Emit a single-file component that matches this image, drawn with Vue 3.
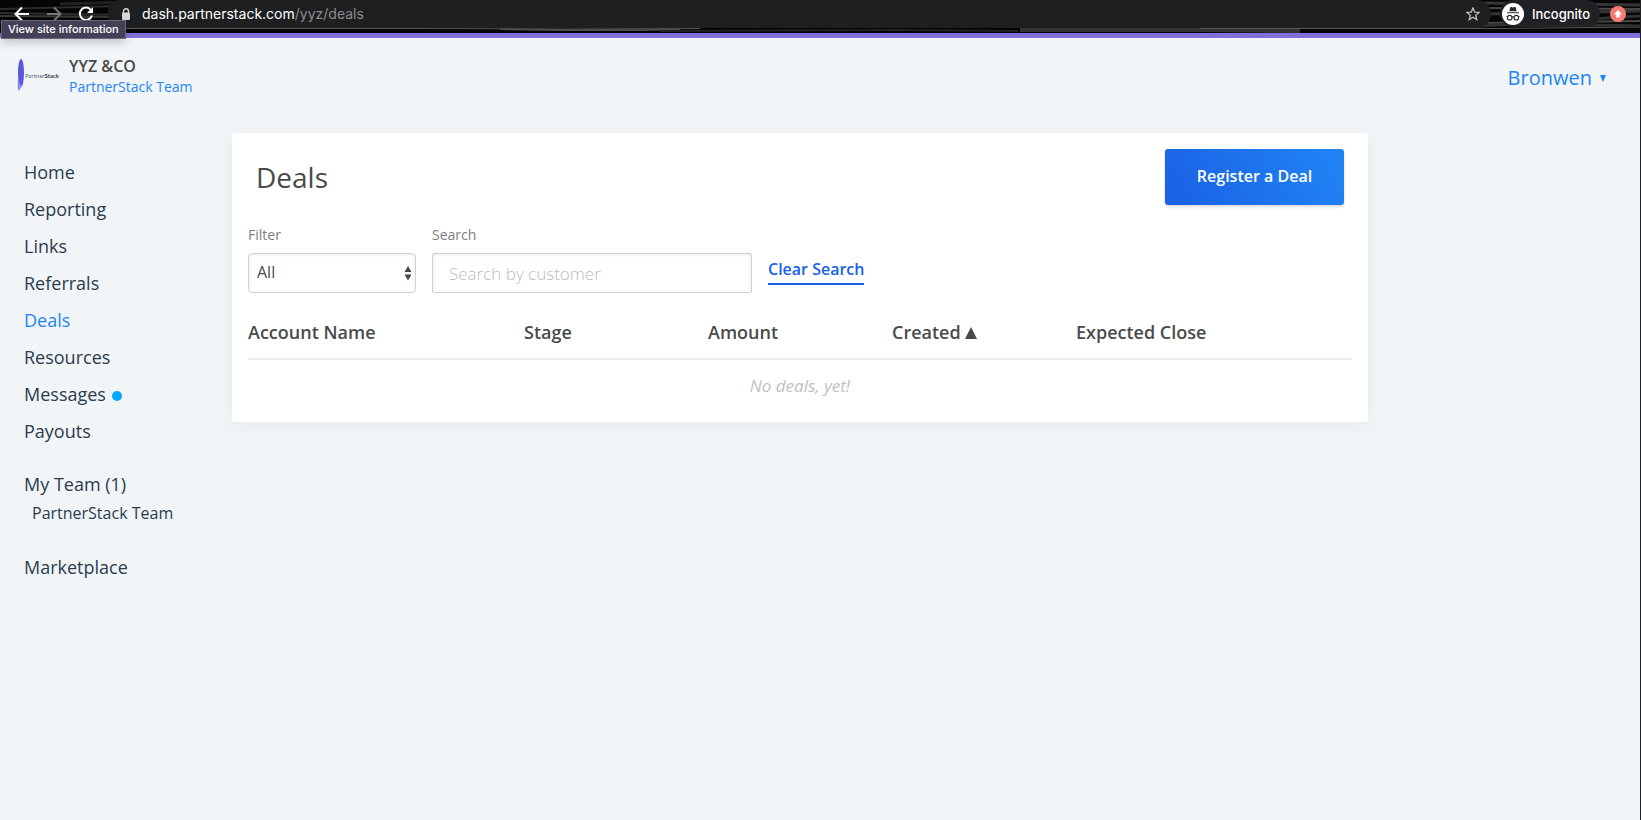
<script setup>
import { ref } from 'vue'

const mainLinks = [
  { label: 'Home' },
  { label: 'Reporting' },
  { label: 'Links' },
  { label: 'Referrals' },
  { label: 'Deals', active: true },
  { label: 'Resources' },
  { label: 'Messages', unread: true },
  { label: 'Payouts' },
]
const filter = ref('All')
const search = ref('')
</script>

<template>
  <div class="window">
    <header class="browser">
      <svg class="streaks" viewBox="0 0 1640 33" preserveAspectRatio="none" aria-hidden="true">
        <rect width="1640" height="33" fill="#050505" />
        <g fill="none">
          <path d="M0 9 L120 6 M0 13 L130 15" stroke="#2c2c2c" stroke-width="2" />
          <path d="M0 16 L120 17" stroke="#3a3a3a" stroke-width="2" />
          <path d="M60 4 L130 2 M120 23 L0 22" stroke="#222" stroke-width="3" />
          <path d="M120 28.5 H420 L560 29 L700 28.5" stroke="#555" />
          <path d="M500 29 L560 30 L640 30 L680 29" stroke="#4c4c4c" stroke-width="2" />
          <path d="M660 31 L900 30 L1018 31" stroke="#222" stroke-width="2" />
          <path d="M1020 30 H1200 L1300 31" stroke="#333" stroke-width="4" />
          <path d="M1200 28.5 H1500 L1640 27" stroke="#555" />
          <path d="M1480 3 L1640 5 M1480 14 L1640 11" stroke="#353535" stroke-width="3" />
          <path d="M1480 8 L1640 9 M1480 23 L1640 21" stroke="#484848" stroke-width="2" />
          <path d="M1480 26 L1640 16 M1590 25 L1640 26" stroke="#303030" stroke-width="3" />
        </g>
      </svg>
      <div class="nav-buttons">
        <button type="button" aria-label="Back">
          <svg width="16" height="16" viewBox="0 0 16 16" fill="none" stroke="#fff" stroke-width="2"><path d="M15 8H2M8 1.5L1.5 8L8 14.5" /></svg>
        </button>
        <button type="button" aria-label="Forward">
          <svg width="16" height="16" viewBox="0 0 16 16" fill="none" stroke="#777" stroke-width="2"><path d="M1 8H14M8 1.5L14.5 8L8 14.5" /></svg>
        </button>
        <button type="button" aria-label="Reload">
          <svg width="16" height="16" viewBox="0 0 16 16" fill="none" stroke="#fff" stroke-width="2"><path d="M13.2 4.2A6.2 6.2 0 1 0 14 9.5" /><path d="M15 1V7H9Z" fill="#fff" stroke="none" /></svg>
        </button>
      </div>
      <div class="omnibox">
        <svg width="10" height="12" viewBox="0 0 10 12"><path d="M2.5 5V3.2a2.5 2.5 0 0 1 5 0V5" fill="none" stroke="#d5d5d5" stroke-width="1.4" /><rect x="1" y="4.5" width="8" height="7.5" rx="1" fill="#d5d5d5" /></svg>
        <span class="url">dash.partnerstack.com<span class="path">/yyz/deals</span></span>
        <button type="button" class="star" aria-label="Bookmark">
          <svg width="14" height="14" viewBox="0 0 14 14" fill="none" stroke="#bdbdbd" stroke-width="1.3"><path d="M7 1L8.7 5.1L13.1 5.4L9.7 8.2L10.8 12.6L7 10.2L3.2 12.6L4.3 8.2L0.9 5.4L5.3 5.1Z" /></svg>
        </button>
      </div>
      <div class="incognito">
        <svg width="22" height="22" viewBox="0 0 22 22"><circle cx="11" cy="11" r="11" fill="#fff" /><path d="M7.3 8.3L8.3 4.3Q8.6 3.7 9.3 4L11 4.6L12.7 4Q13.4 3.7 13.7 4.3L14.7 8.3ZM5 9.2H17V10.3H5Z" fill="#292a2d" /><g fill="none" stroke="#292a2d" stroke-width="1.1"><circle cx="7.7" cy="14.7" r="2.3" /><circle cx="14.3" cy="14.7" r="2.3" /><path d="M4.5 13.5H6M10 14.2Q11 13.6 12 14.2M16 13.5H17.5" /></g></svg>
        <span>Incognito</span>
      </div>
      <button type="button" class="update" aria-label="Update browser">
        <svg width="16" height="16" viewBox="0 0 16 16"><circle cx="8" cy="8" r="8" fill="#f47c73" /><path d="M8 4L12.2 8.4H9.8V11.5H6.2V8.4H3.8Z" fill="#fff" /></svg>
      </button>
      <div class="tooltip" role="tooltip">View site information</div>
    </header>

    <div class="page">
      <div class="topbar">
        <div class="logo">
          <svg width="8" height="32" viewBox="0 0 8 32" aria-hidden="true">
            <ellipse cx="4" cy="14" rx="3" ry="14" fill="#5a58dd" />
            <path d="M1 18Q2 26 5 26L2 32Q0 30 1 18Z" fill="#8984f0" />
          </svg>
          <span>Partner<b>Stack</b></span>
        </div>
        <div class="company">
          <div class="company-name">YYZ &amp;CO</div>
          <a href="#" class="company-team">PartnerStack Team</a>
        </div>
        <button type="button" class="user">Bronwen <svg width="6" height="7" viewBox="0 0 6 7"><path d="M0 0H6L3 7Z" fill="#1f85f6" /></svg></button>
      </div>

      <div class="body">
        <nav class="sidebar">
          <a v-for="l in mainLinks" :key="l.label" href="#" :class="{ active: l.active }">{{ l.label }}<i v-if="l.unread" class="dot"></i></a>
          <a href="#" class="group">My Team (1)</a>
          <a href="#" class="sub">PartnerStack Team</a>
          <a href="#" class="group">Marketplace</a>
        </nav>

        <main class="card">
          <div class="card-head">
            <h1>Deals</h1>
            <button type="button" class="register">Register a Deal</button>
          </div>
          <form class="filters" @submit.prevent>
            <div class="field">
              <label for="filter">Filter</label>
              <div class="select-wrap">
                <select id="filter" v-model="filter"><option>All</option></select>
                <svg width="8" height="16" viewBox="0 0 8 16" fill="#444"><path d="M4 1L7.5 7H.5ZM4 15.5L.5 9.5H7.5Z" /></svg>
              </div>
            </div>
            <div class="field wide">
              <label for="search">Search</label>
              <input id="search" v-model="search" type="text" placeholder="Search by customer">
            </div>
            <button type="button" class="clear" @click="search = ''">Clear Search</button>
          </form>
          <table>
            <colgroup><col class="c3"><col class="c2"><col class="c2"><col class="c2"><col class="c3"></colgroup>
            <thead>
              <tr>
                <th>Account Name</th>
                <th>Stage</th>
                <th>Amount</th>
                <th>Created <svg width="12" height="12" viewBox="0 0 12 12"><path d="M6 0L12 12H0Z" fill="#4a4a4a" /></svg></th>
                <th>Expected Close</th>
              </tr>
            </thead>
            <tbody>
              <tr><td colspan="5">No deals, yet!</td></tr>
            </tbody>
          </table>
        </main>
      </div>
    </div>
  </div>
</template>

<style>
body { background: #f1f5f8; }
</style>

<style scoped>
* { box-sizing: border-box; }
.window {
  display: flex;
  flex-direction: column;
  min-height: 100vh;
  border-right: 1px solid #222;
  background: #f1f5f8;
  color: #4a4a4a;
  font-family: "Open Sans", "Noto Sans", sans-serif;
}
button { border: 0; padding: 0; background: none; font: inherit; color: inherit; cursor: pointer; }
a { color: inherit; text-decoration: none; }
svg { display: block; }

.browser {
  position: relative;
  display: flex;
  align-items: flex-start;
  height: 38px;
  border-bottom: 5px solid #836fd9;
  font-family: Inter, sans-serif;
  color: #fff;
}
.streaks { position: absolute; inset: 0; width: 100%; height: 33px; }
.nav-buttons { position: relative; display: flex; gap: 16px; padding: 6px 14px 0; width: 108px; }
.omnibox {
  position: relative;
  flex: 1;
  display: flex;
  align-items: center;
  height: 28px;
  padding: 0 11px 0 13px;
  border-radius: 12px 14px 14px 12px;
  background: #1e1f21;
}
.url { flex: 1; margin-left: 11px; font-size: 14px; line-height: 28px; }
.path { color: #8b8c8e; }
.incognito {
  position: relative;
  display: flex;
  align-items: center;
  gap: 8px;
  height: 27px;
  margin-left: 9px;
  padding: 0 10px 0 2px;
  border-radius: 14px;
  background: #202124;
  font-size: 13px;
  font-weight: 500;
}
.update { position: relative; margin: 6px 14px 0 10px; }
.tooltip {
  position: absolute;
  left: 1px;
  top: 20px;
  z-index: 2;
  padding: 0 6px;
  border: 1px solid #6a667b;
  background: #453f58;
  box-shadow: 0 4px 8px rgba(0, 0, 0, .18);
  font-size: 11px;
  font-weight: 500;
  line-height: 17px;
  white-space: nowrap;
}

.topbar { display: flex; align-items: flex-start; height: 95px; padding: 18px 34px 0 17px; }
.logo {
  display: flex;
  align-items: center;
  width: 44px;
  margin-top: 3px;
  color: #59677a;
  font: 6px Lato, sans-serif;
}
.logo b { color: #34445a; }
.company { flex: 1; margin-left: 8px; }
.company-name { font-size: 16px; font-weight: 600; line-height: 20px; }
.company-team { display: block; color: #1f85f6; font-size: 14px; line-height: 22px; }
.user { display: flex; align-items: center; gap: 8px; margin-top: 8px; color: #1f85f6; font-size: 20px; line-height: 28px; }

.body { display: flex; align-items: flex-start; }
.sidebar { display: flex; flex-direction: column; width: 232px; padding: 21px 0 0 24px; color: #2b3c4e; font-size: 18px; line-height: 37px; }
.sidebar .active { color: #1f85f6; }
.dot { display: inline-block; width: 10px; height: 10px; margin-left: 6px; border-radius: 50%; background: #03a9ff; }
.sidebar .group { margin-top: 16px; }
.sidebar .sub { margin-bottom: 10px; padding-left: 8px; font-size: 16px; line-height: 20px; }

.card {
  flex: 1;
  margin-right: 272px;
  padding: 16px;
  border-radius: 3px;
  background: #fff;
  box-shadow: 0 4px 16px rgba(60, 60, 60, .06);
}
.card-head { display: flex; justify-content: space-between; padding: 0 8px; }
h1 { margin: 0; font-size: 28px; font-weight: 400; line-height: 56px; }
.register {
  width: 179px;
  height: 56px;
  padding-bottom: 2px;
  border-radius: 3px;
  background: linear-gradient(60deg, #1a60e5, #2185f6);
  box-shadow: 0 2px 3px rgba(0, 0, 0, .14);
  color: #fff;
  font-size: 16px;
  font-weight: 600;
}
.filters { display: flex; gap: 16px; margin-top: 20px; }
.field { width: 168px; }
.field.wide { width: 320px; }
label { display: block; margin-bottom: 8px; color: #7b7e83; font-size: 14px; line-height: 20px; }
.select-wrap { position: relative; }
.select-wrap svg { position: absolute; right: 4px; top: 12px; pointer-events: none; }
select, input {
  display: block;
  width: 100%;
  height: 40px;
  border: 1px solid #cfd2d8;
  border-radius: 4px;
  background: #fff;
  box-shadow: inset 0 1px 3px rgba(0, 0, 0, .09);
  color: #4a4a4a;
  font: 16px "Open Sans", "Noto Sans", sans-serif;
}
select { padding: 0 8px 2px; appearance: none; }
input { padding: 0 16px; border-radius: 2px; font-size: 17px; font-weight: 300; }
input::placeholder { color: #bcbcbc; }
.clear { align-self: flex-start; margin-top: 30px; border-bottom: 2px solid #1a60e5; color: #1a60e5; font-size: 16px; font-weight: 600; line-height: 28px; }

table { width: 100%; margin-top: 13px; border-collapse: collapse; table-layout: fixed; }
.c3 { width: 25%; }
.c2 { width: 16.6667%; }
th { height: 53px; padding: 0; border-bottom: 2px solid #ececec; text-align: left; font-size: 18px; font-weight: 600; }
th svg { display: inline-block; }
td { height: 47px; padding: 6px 0 0; color: #bfbfbf; font-size: 17px; line-height: 24px; font-style: italic; text-align: center; }
</style>
